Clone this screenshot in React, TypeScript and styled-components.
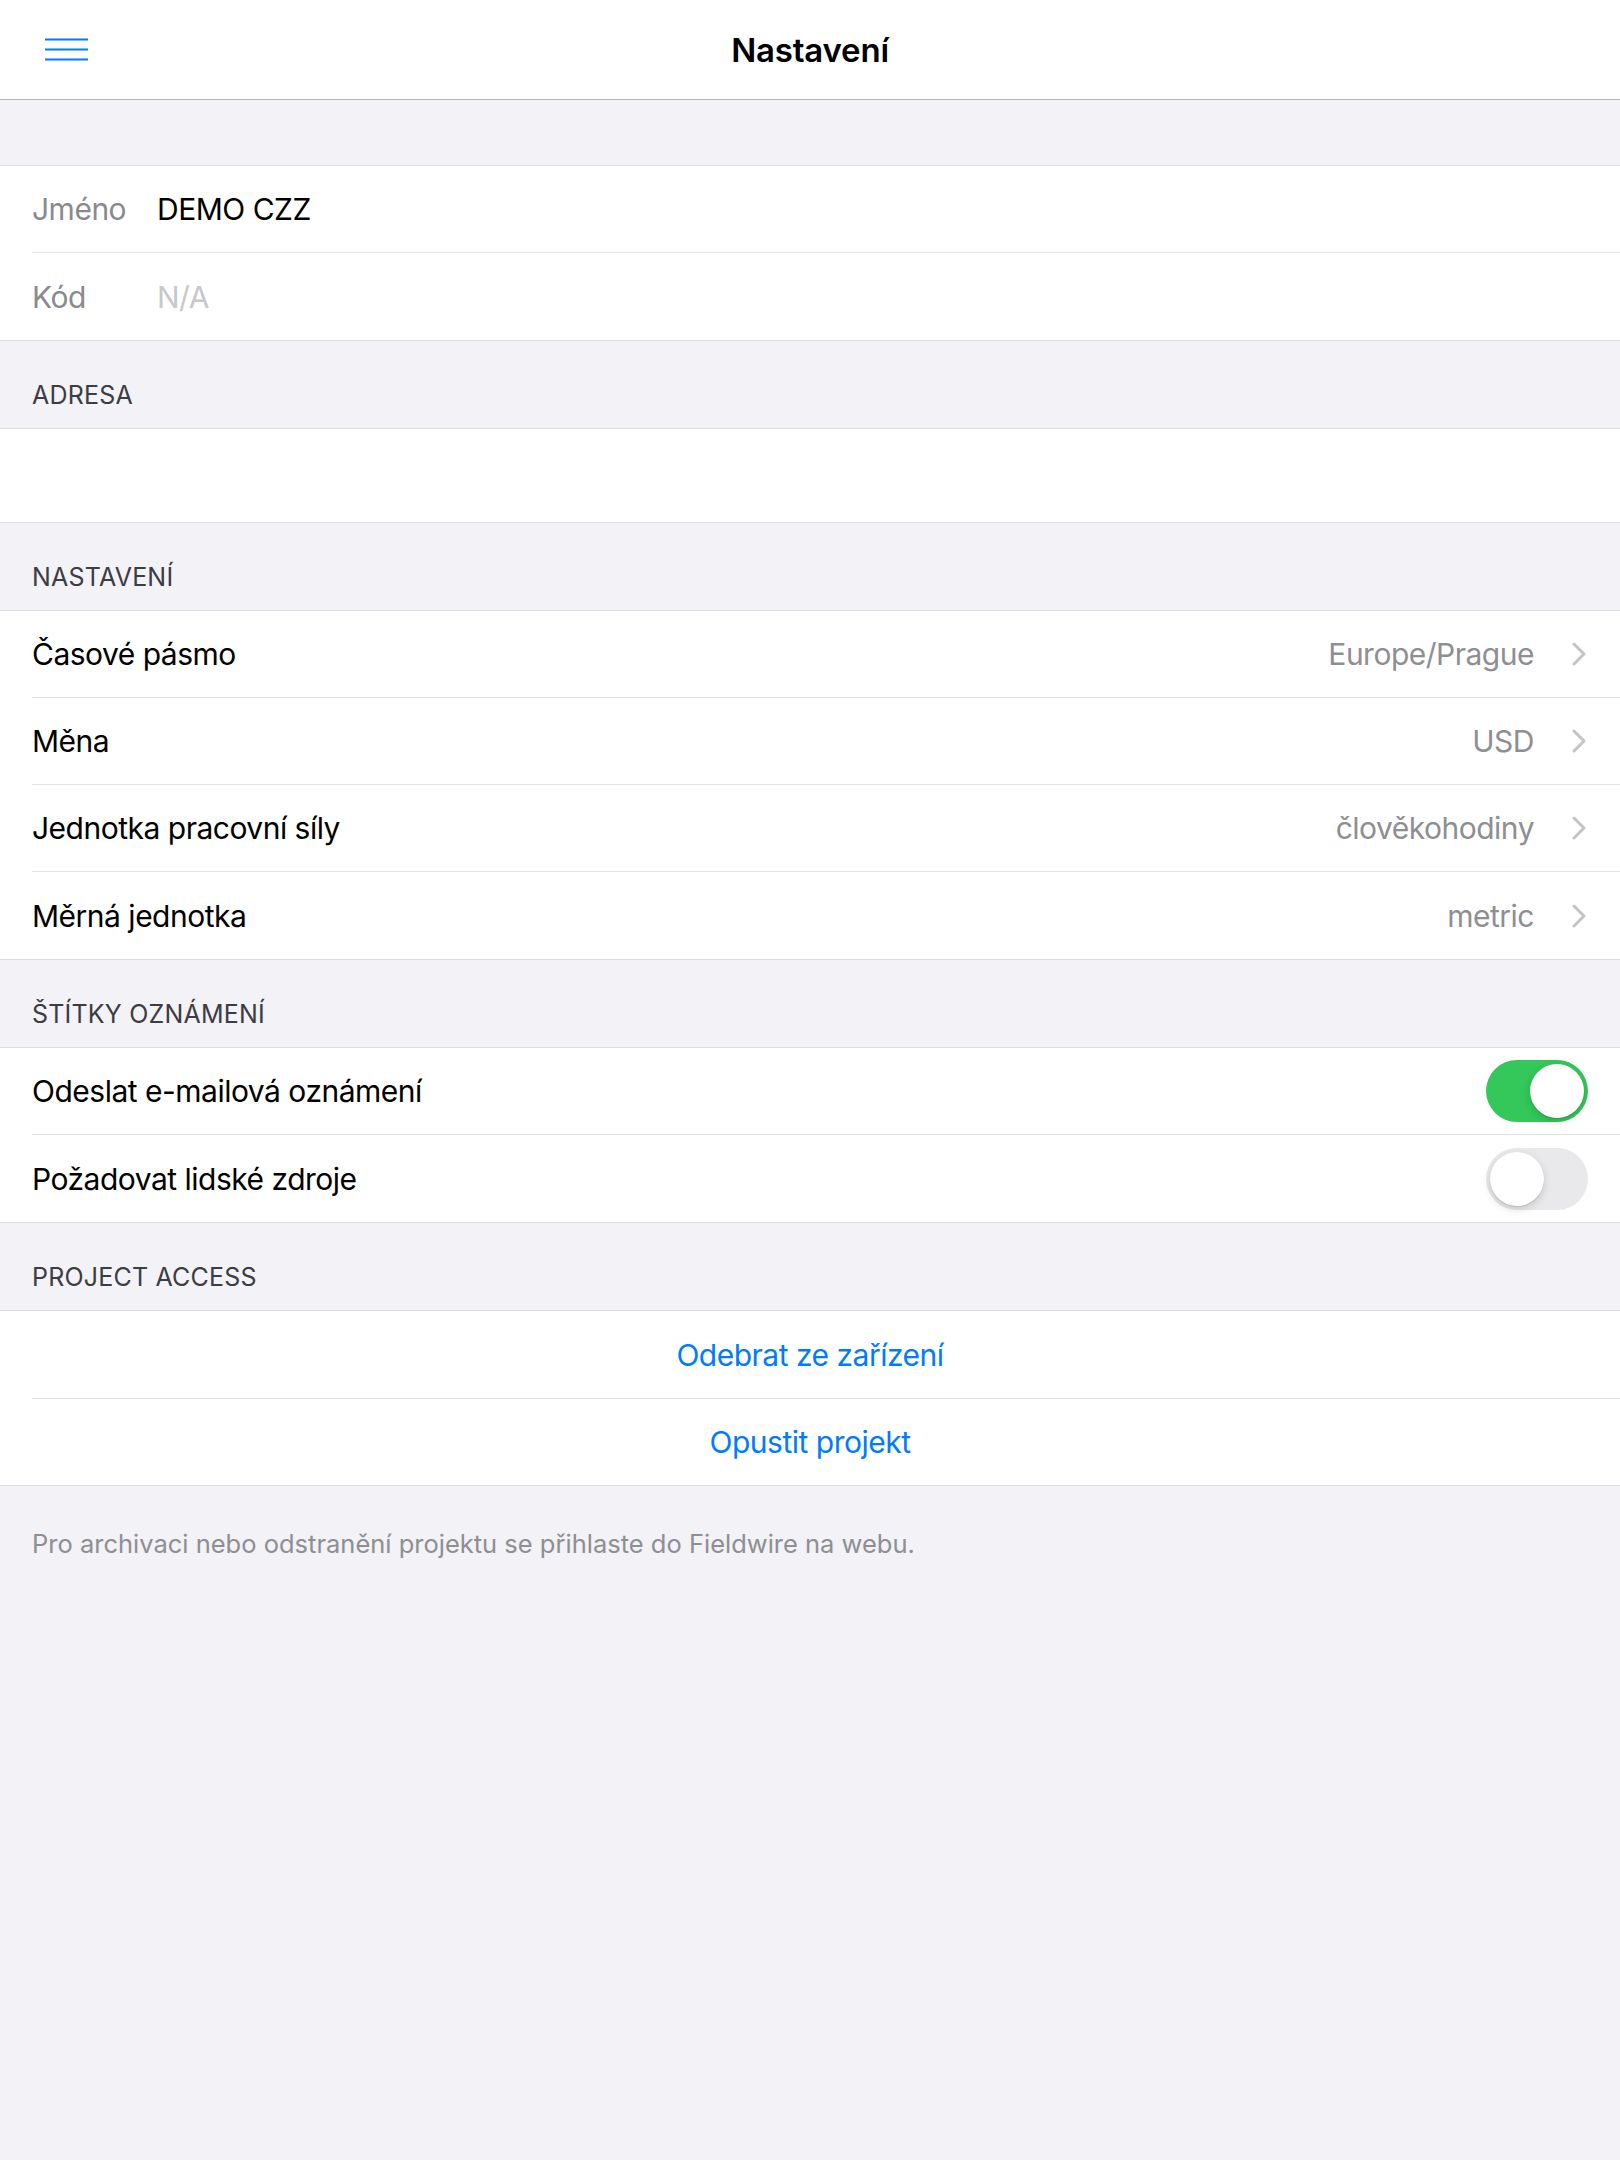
import * as React from 'react';
import styled, { createGlobalStyle } from 'styled-components';

const GlobalStyle = createGlobalStyle`
  html, body {
    margin: 0;
    padding: 0;
    background: #f2f2f7;
  }
  body {
    font-family: Inter, 'Noto Sans', 'Liberation Sans', sans-serif;
    -webkit-font-smoothing: antialiased;
  }
`;

const Page = styled.div`
  min-height: 2160px;
  background: #f2f2f7;
  color: #000;
`;

const NavBar = styled.header`
  height: 99px;
  background: #fff;
  border-bottom: 1px solid #b1b1b6;
  display: grid;
  grid-template-columns: 200px 1fr 200px;
  align-items: center;
`;

const MenuButton = styled.button`
  border: 0;
  background: none;
  padding: 0 0 0 45px;
  width: 100px;
  height: 60px;
  display: flex;
  align-items: center;
  cursor: pointer;
`;

const NavTitle = styled.h1`
  margin: 0;
  text-align: center;
  font-size: 33px;
  font-weight: 600;
  letter-spacing: -0.2px;
`;

const Spacer = styled.div<{ $h: number }>`
  height: ${(p) => p.$h}px;
`;

const SectionHeader = styled.div`
  height: 87px;
  box-sizing: border-box;
  padding: 0 32px 18px;
  display: flex;
  align-items: flex-end;
  font-size: 25px;
  color: #3c3c43;
  letter-spacing: 0.2px;
`;

const Group = styled.section`
  background: #fff;
  border-top: 1px solid #dcdce0;
  border-bottom: 1px solid #dcdce0;
`;

const Row = styled.div<{ $last?: boolean }>`
  height: 87px;
  margin-left: 32px;
  padding-right: 32px;
  display: flex;
  align-items: center;
  font-size: 30px;
  letter-spacing: -0.5px;
  border-bottom: ${(p) => (p.$last ? 'none' : '1px solid #e2e2e6')};
  box-sizing: border-box;
`;

const EmptyRow = styled.div`
  height: 93px;
`;

const FieldLabel = styled.span`
  width: 125px;
  flex: none;
  color: #8a8a8e;
`;

const FieldValue = styled.span<{ $placeholder?: boolean }>`
  color: ${(p) => (p.$placeholder ? '#c7c7cc' : '#000')};
`;

const Label = styled.span`
  flex: 1;
  color: #000;
`;

const Detail = styled.span`
  color: #8e8e93;
  margin-right: 38px;
`;

const ChevronBox = styled.span`
  display: flex;
  margin-right: 2px;
`;

const ActionRow = styled(Row)`
  justify-content: center;
  margin-left: 0;
  padding: 0;
  color: #007aff;
  cursor: pointer;
  position: relative;
  border-bottom: none;
  &::after {
    content: '';
    display: ${(p) => (p.$last ? 'none' : 'block')};
    position: absolute;
    left: 32px;
    right: 0;
    bottom: -1px;
    height: 1px;
    background: #e2e2e6;
  }
`;

const Footer = styled.p`
  margin: 0;
  padding: 42px 32px;
  font-size: 25.5px;
  color: #8e8e93;
`;

const Track = styled.button<{ $on: boolean }>`
  width: 102px;
  height: 62px;
  border-radius: 31px;
  border: 0;
  padding: 4px;
  background: ${(p) => (p.$on ? '#34c759' : '#e9e9eb')};
  display: flex;
  justify-content: ${(p) => (p.$on ? 'flex-end' : 'flex-start')};
  box-sizing: border-box;
  cursor: pointer;
`;

const Knob = styled.span`
  width: 54px;
  height: 54px;
  border-radius: 50%;
  background: #fff;
  box-shadow: 0 3px 8px rgba(0, 0, 0, 0.15), 0 1px 1px rgba(0, 0, 0, 0.12);
`;

const Hamburger = () => (
  <svg width="44" height="24" viewBox="0 0 44 24">
    <g stroke="#007aff" strokeWidth="2.2">
      <line x1="0" y1="1.5" x2="43" y2="1.5" />
      <line x1="0" y1="11.5" x2="43" y2="11.5" />
      <line x1="0" y1="21.5" x2="43" y2="21.5" />
    </g>
  </svg>
);

const Chevron = () => (
  <ChevronBox>
    <svg width="14" height="24" viewBox="0 0 14 24">
      <path d="M2 2 L12 12 L2 22" fill="none" stroke="#c4c4c7" strokeWidth="3" strokeLinecap="round" strokeLinejoin="round" />
    </svg>
  </ChevronBox>
);

const Toggle = ({ on, onChange }: { on: boolean; onChange: () => void }) => (
  <Track $on={on} onClick={onChange}>
    <Knob />
  </Track>
);

const prefs = [
  { label: 'Časové pásmo', value: 'Europe/Prague' },
  { label: 'Měna', value: 'USD' },
  { label: 'Jednotka pracovní síly', value: 'člověkohodiny' },
  { label: 'Měrná jednotka', value: 'metric' },
];

export default function App() {
  const [email, setEmail] = React.useState(true);
  const [people, setPeople] = React.useState(false);

  return (
    <Page>
      <GlobalStyle />
      <NavBar>
        <MenuButton aria-label="menu">
          <Hamburger />
        </MenuButton>
        <NavTitle>Nastavení</NavTitle>
        <div />
      </NavBar>

      <Spacer $h={65} />
      <Group>
        <Row>
          <FieldLabel>Jméno</FieldLabel>
          <FieldValue>DEMO CZZ</FieldValue>
        </Row>
        <Row $last>
          <FieldLabel>Kód</FieldLabel>
          <FieldValue $placeholder>N/A</FieldValue>
        </Row>
      </Group>

      <SectionHeader>ADRESA</SectionHeader>
      <Group>
        <EmptyRow />
      </Group>

      <SectionHeader>NASTAVENÍ</SectionHeader>
      <Group>
        {prefs.map((p, i) => (
          <Row key={p.label} $last={i === prefs.length - 1}>
            <Label>{p.label}</Label>
            <Detail>{p.value}</Detail>
            <Chevron />
          </Row>
        ))}
      </Group>

      <SectionHeader>ŠTÍTKY OZNÁMENÍ</SectionHeader>
      <Group>
        <Row>
          <Label>Odeslat e-mailová oznámení</Label>
          <Toggle on={email} onChange={() => setEmail(!email)} />
        </Row>
        <Row $last>
          <Label>Požadovat lidské zdroje</Label>
          <Toggle on={people} onChange={() => setPeople(!people)} />
        </Row>
      </Group>

      <SectionHeader>PROJECT ACCESS</SectionHeader>
      <Group>
        <ActionRow>Odebrat ze zařízení</ActionRow>
        <ActionRow $last>Opustit projekt</ActionRow>
      </Group>

      <Footer>Pro archivaci nebo odstranění projektu se přihlaste do Fieldwire na webu.</Footer>
    </Page>
  );
}
